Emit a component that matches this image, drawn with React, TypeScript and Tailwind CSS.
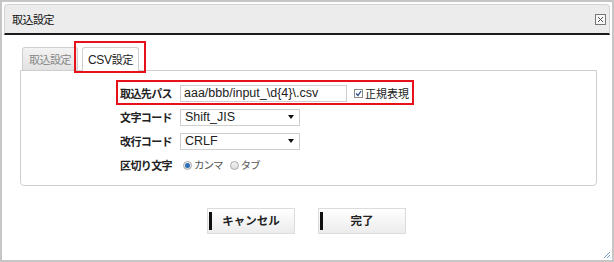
import React from "react";

const jp = { fontFamily: '"Noto Sans CJK JP", "Noto Sans", sans-serif' };
const lat = { fontFamily: '"Liberation Sans", "Noto Sans CJK JP", sans-serif' };

function Label({ children }: { children: React.ReactNode }) {
  return (
    <div className="w-[151px] text-right text-[11px] font-bold text-[#222] tracking-[-0.6px]" style={jp}>
      {children}
    </div>
  );
}

function Select({ value }: { value: string }) {
  return (
    <div className="ml-[8px] w-[120px] h-[17px] border border-[#cfcfcf] bg-white flex items-center justify-between pl-[4px] pr-[5px]">
      <span className="text-[12.5px] text-[#222]" style={lat}>{value}</span>
      <svg width="6" height="4" viewBox="0 0 6 4"><path d="M0 0h6L3 4z" fill="#111" /></svg>
    </div>
  );
}

function Radio({ checked }: { checked?: boolean }) {
  return (
    <span className="w-[9px] h-[9px] rounded-full border border-[#a8a8a8] bg-gradient-to-b from-[#f4f4f4] to-[#dcdcdc] flex items-center justify-center">
      {checked && <span className="w-[5px] h-[5px] rounded-full bg-[#2a6fb5]" />}
    </span>
  );
}

function Button({ children }: { children: React.ReactNode }) {
  return (
    <div className="relative w-[88px] h-[26px] border border-[#dcdcdc] bg-gradient-to-b from-white to-[#ececec] flex items-center justify-center text-[11.5px] font-bold text-[#222]" style={jp}>
      <span className="absolute left-[1px] top-[3px] bottom-[3px] w-[3px] bg-[#111]" />
      {children}
    </div>
  );
}

export default function App() {
  return (
    <div className="relative w-[614px] h-[262px] border-2 border-[#c6c6c6] bg-white p-[2px] flex flex-col">
      {/* title bar */}
      <div className="h-[31px] bg-[#ececec] border border-[#d4d4d4] border-b-2 border-b-[#1c1c1c] rounded-t-[4px] flex items-center justify-between pl-[7px] pr-[3px]">
        <span className="text-[11px] text-[#111] tracking-[-0.5px]" style={jp}>取込設定</span>
        <span className="w-[11px] h-[11px] border border-[#777] bg-[#f6f6f6] flex items-center justify-center">
          <svg width="7" height="7" viewBox="0 0 7 7"><path d="M1 1L6 6M6 1L1 6" stroke="#555" strokeWidth="1" /></svg>
        </span>
      </div>

      {/* body */}
      <div className="pl-[16px] pr-[13px] mt-[11px]">
        {/* tabs */}
        <div className="flex items-end pl-[2px] gap-[4px] h-[24px]">
          <div className="w-[56px] h-[23px] border border-[#cfcfcf] border-b-0 rounded-t-[3px] bg-gradient-to-b from-[#f3f3f3] to-[#e2e2e2] flex items-center justify-center text-[11px] text-[#888] tracking-[-0.5px]" style={jp}>
            取込設定
          </div>
          <div className="relative w-[57px] h-[24px] border border-[#cfcfcf] border-b-0 rounded-t-[3px] bg-white flex items-center justify-center text-[11px] text-[#222] tracking-[-0.3px] mb-[-1px] z-10" style={jp}>
            <span style={lat} className="text-[12px]">CSV</span>設定
            <span className="absolute left-[-9px] top-[-7px] w-[72px] h-[32px] border-2 border-[#e8101a]" />
          </div>
        </div>

        {/* panel */}
        <div className="h-[116px] border border-[#cfcfcf] rounded-b-[4px] pt-[10px] flex flex-col">
          <div className="relative h-[24px] flex items-center">
            <Label>取込先パス</Label>
            <div className="ml-[8px] w-[167px] h-[17px] border border-[#cfcfcf] bg-white flex items-center pl-[3px] text-[12.5px] text-[#222]" style={lat}>
              aaa/bbb/input_\d{"{"}4{"}"}\.csv
            </div>
            <span className="ml-[7px] w-[9px] h-[9px] border border-[#8a8a8a] bg-white flex items-center justify-center">
              <svg width="7" height="7" viewBox="0 0 7 7"><path d="M1 3.5L3 5.5L6 1" stroke="#2b4a8a" strokeWidth="1.3" fill="none" /></svg>
            </span>
            <span className="ml-[2px] text-[11px] text-[#222]" style={jp}>正規表現</span>
            <span className="absolute left-[95px] top-[-1px] w-[298px] h-[25px] border-2 border-[#e8101a]" />
          </div>
          <div className="h-[24px] flex items-center">
            <Label>文字コード</Label>
            <Select value="Shift_JIS" />
          </div>
          <div className="h-[24px] flex items-center">
            <Label>改行コード</Label>
            <Select value="CRLF" />
          </div>
          <div className="h-[24px] flex items-center">
            <Label>区切り文字</Label>
            <div className="ml-[11px] flex items-center gap-[2px] text-[10.5px] text-[#555] tracking-[-1px]" style={jp}>
              <Radio checked />
              <span>カンマ</span>
              <span className="w-[3px]" />
              <Radio />
              <span>タブ</span>
            </div>
          </div>
        </div>
      </div>

      {/* buttons */}
      <div className="mt-[22px] flex justify-center gap-[23px] pr-[1px]">
        <Button>キャンセル</Button>
        <Button>完了</Button>
      </div>

      {/* resize grip */}
      <svg className="absolute right-[1px] bottom-[1px]" width="8" height="8" viewBox="0 0 8 8">
        <path d="M7 1L1 7M7 4L4 7M7 6.5L6.5 7" stroke="#7aa0c8" strokeWidth="1" />
      </svg>
    </div>
  );
}
